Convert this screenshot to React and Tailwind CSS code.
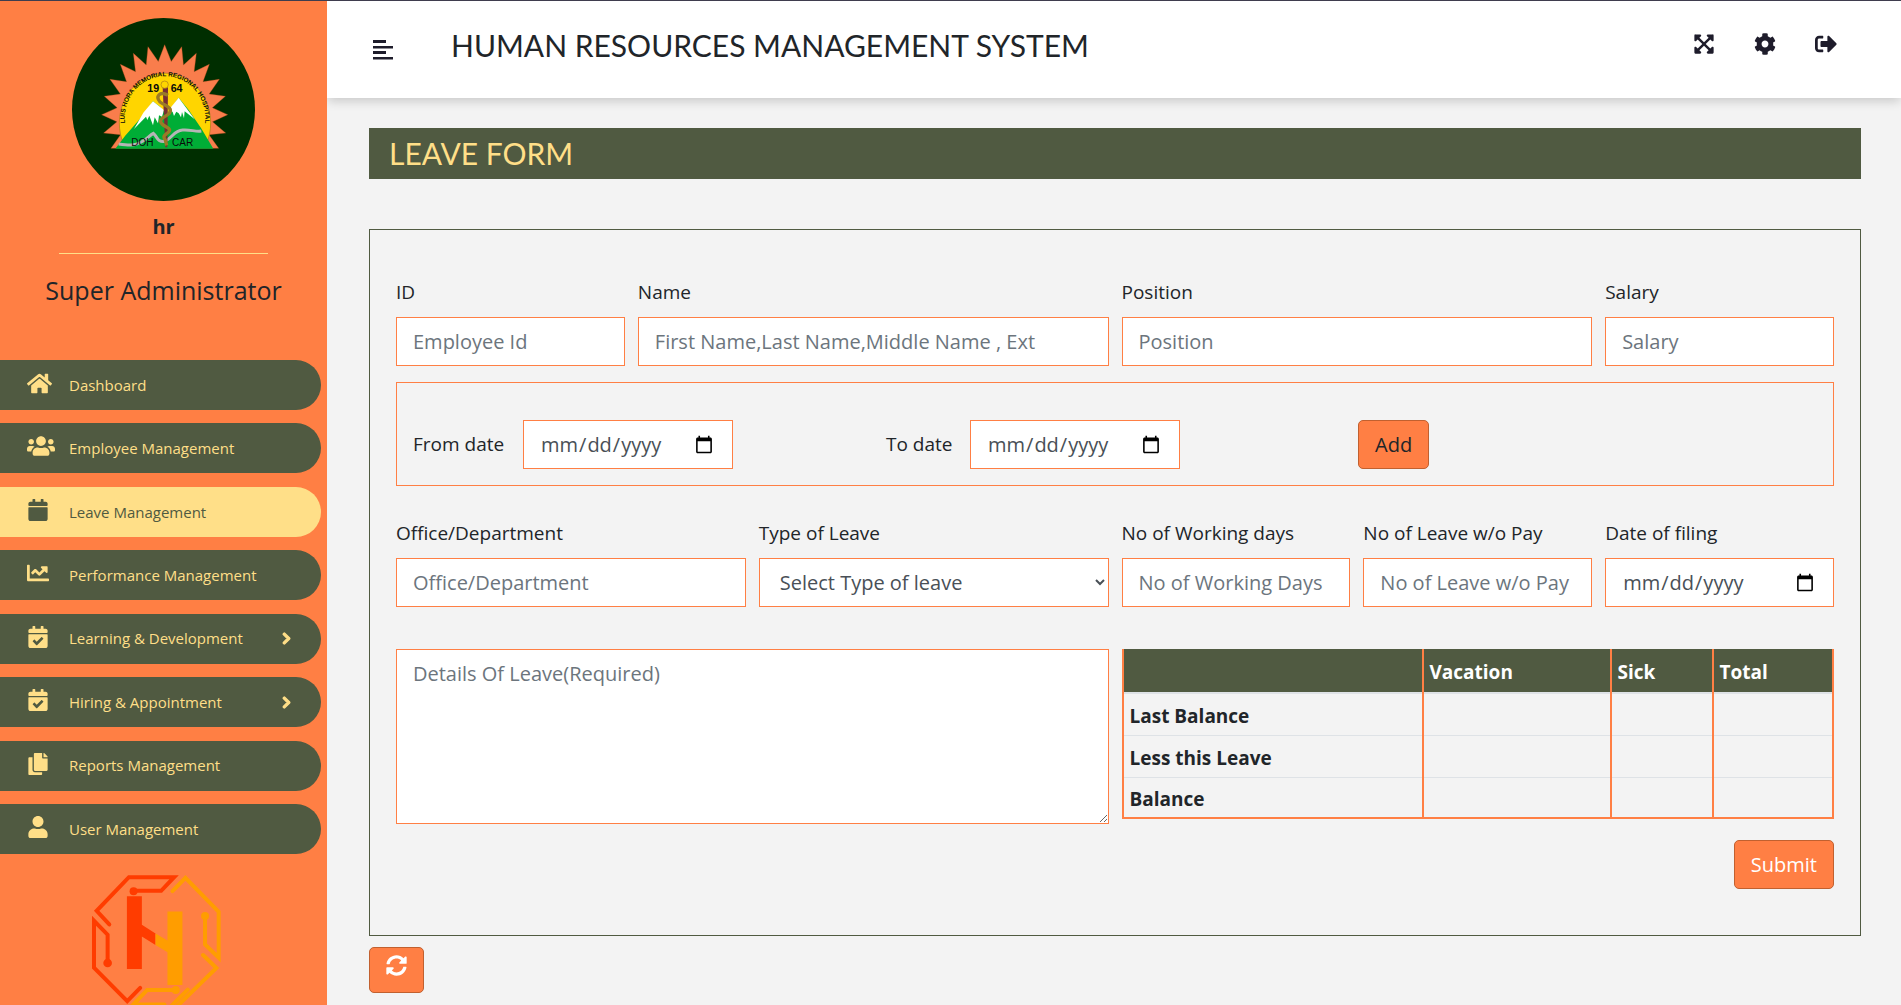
import React from "react";
import {
  FaHome,
  FaUsers,
  FaCalendar,
  FaChartLine,
  FaCalendarCheck,
  FaCopy,
  FaUser,
  FaChevronRight,
  FaExpandArrowsAlt,
  FaCog,
  FaSignOutAlt,
  FaSyncAlt,
} from "react-icons/fa";

const NAV = [
  { label: "Dashboard", Icon: FaHome, size: 25 },
  { label: "Employee Management", Icon: FaUsers, size: 28 },
  { label: "Leave Management", Icon: FaCalendar, size: 22, active: true },
  { label: "Performance Management", Icon: FaChartLine, size: 22 },
  { label: "Learning & Development", Icon: FaCalendarCheck, size: 22, more: true },
  { label: "Hiring & Appointment", Icon: FaCalendarCheck, size: 22, more: true },
  { label: "Reports Management", Icon: FaCopy, size: 22 },
  { label: "User Management", Icon: FaUser, size: 22 },
];

const RAY_TIPS = [
  [333, 445], [311, 399], [305, 344], [313, 289], [330, 238], [361, 193], [400, 160], [444, 140],
  [494, 134], [545, 140], [589, 160], [628, 193], [658, 238], [676, 289], [683, 344], [677, 399], [656, 445],
];

function sunPoints() {
  const out = [];
  RAY_TIPS.forEach((tip, i) => {
    out.push(tip.join(","));
    const next = RAY_TIPS[i + 1];
    if (next) {
      const mx = (tip[0] + next[0]) / 2 - 494.5;
      const my = (tip[1] + next[1]) / 2 - 345;
      out.push(`${494.5 + mx * 0.77},${345 + my * 0.77}`);
    }
  });
  return out.join(" ");
}

function HospitalSeal() {
  return (
    <svg viewBox="216 54 549 549" className="size-[183px] shrink-0" role="img" aria-label="Luis Hora Memorial Regional Hospital">
      <defs>
        <path id="seal-arc" d="M378 388 A121 127 0 1 1 612 388" />
      </defs>
      <circle cx="490.500" cy="328.500" r="274.500" fill="#002e00" />
      <polygon points={sunPoints()} fill="#f97d4c" stroke="#c9501f" strokeWidth="1" />
      <path d="M366 420 A137 150 0 1 1 624 420 Z" fill="#ffd500" stroke="#a8791c" strokeWidth="2" />
      <path d="M346 446 L375 408 L430 345 L459 304 L482 322 L500 345 L518 318 L536 293 L566 330 L603 384 L640 446 Z" fill="#00ad36" />
      <path
        d="M459 304 L430 338 L402 387 L438 350 L442 360 L448 347 L459 376 L464 352 L474 370 L477 346 L486 350 L492 330 Z"
        fill="#fff"
      />
      <path d="M536 293 L508 328 L518 336 L522 348 L529 335 L536 340 L543 352 L546 336 L552 355 L554 334 L584 358 Z" fill="#fff" />
      <path
        d="M356 432 C385 436 404 438 424 426 C444 416 448 406 460 400 C474 412 470 426 494 424 C520 412 520 392 548 390 C572 388 586 396 604 393"
        fill="none"
        stroke="#b5b5b5"
        strokeWidth="9"
      />
      <path d="M488 262 H504 L502 442 H496 Z" fill="#762f33" />
      <circle cx="494" cy="254" r="11" fill="#ffd500" stroke="#a8791c" strokeWidth="2" />
      <path
        d="M504 286 C478 272 466 290 480 306 C496 318 520 322 508 340 C496 352 472 356 486 372 C496 382 516 384 506 396 C496 404 486 408 496 420 L500 436"
        fill="none"
        stroke="#9a7a26"
        strokeWidth="10"
      />
      <g fontFamily="Liberation Sans, Arial, sans-serif" fill="#0a0a0a">
        <text x="442" y="275" fontSize="32" fontWeight="700">19</text>
        <text x="512" y="275" fontSize="32" fontWeight="700">64</text>
        <text x="394" y="437" fontSize="30">DOH</text>
        <text x="516" y="437" fontSize="30">CAR</text>
        <text fontSize="19" fontWeight="700">
          <textPath href="#seal-arc" startOffset="50%" textAnchor="middle">
            LUIS HORA MEMORIAL REGIONAL HOSPITAL
          </textPath>
        </text>
      </g>
    </svg>
  );
}

function CircuitLogo() {
  return (
    <svg viewBox="270 645 400 510" className="h-[170px] w-[133px]" fill="none" strokeWidth="12" strokeLinecap="round" aria-hidden="true">
      <g stroke="#ff3c00">
        <path d="M328 796 L290 755 L387 654 H523 L484 695 H401" />
        <path d="M323 911 V827 L282 785 V926 L382 1027 L421 987" />
        <circle cx="401" cy="696" r="12" fill="#ff3c00" stroke="none" />
        <circle cx="323" cy="912" r="13" fill="#ff3c00" stroke="none" />
      </g>
      <path d="M381 711 H426 V797 L467 823 V858 L426 832 V930 H381 Z" fill="#ff3c00" />
      <path d="M467 823 L503 844 V757 H548 V978 H503 V880 L467 858 Z" fill="#ff9d00" />
      <g stroke="#ff9d00">
        <path d="M518 696 L557 656 L657 758 V896 L616 856 V772" />
        <path d="M610 888 L650 927 L520 1054" />
        <path d="M528 993 H442 L400 1037 H494 M564 992 L510 1046" />
        <circle cx="616" cy="771" r="12" fill="#ff9d00" stroke="none" />
        <circle cx="528" cy="993" r="12" fill="#ff9d00" stroke="none" />
      </g>
    </svg>
  );
}

function Sidebar() {
  return (
    <aside className="relative z-10 flex w-[327px] shrink-0 flex-col items-center overflow-hidden bg-[#ff7f44] pt-[17px]">
      <HospitalSeal />
      <p className="mt-2.5 text-xl leading-8 font-bold">hr</p>
      <hr className="mt-2.5 w-[209px] border-[#ffdf88]" />
      <p className="mt-3.5 text-[25px] leading-[44px]">Super Administrator</p>
      <nav className="mt-12 grid h-[494px] w-full shrink-0 content-between pr-1.5">
        {NAV.map(({ label, Icon, size, active, more }) => (
          <a
            key={label}
            href="#"
            className={
              "flex h-[50px] items-center rounded-r-full pl-[27px] text-[15px] " +
              (active ? "bg-[#ffdf88] text-[#505a41]" : "bg-[#505a41] text-[#ffdf88]")
            }
          >
            <span className="w-[42px] pb-1">
              <Icon size={size} />
            </span>
            <span className="flex-1">{label}</span>
            {more && <FaChevronRight size={13} className="mr-7 stroke-current stroke-[50]" />}
          </a>
        ))}
      </nav>
      <div className="mt-5 mr-3.5 shrink-0">
        <CircuitLogo />
      </div>
    </aside>
  );
}

function TopBar() {
  return (
    <header className="relative flex h-[97px] shrink-0 items-start bg-white pt-5 pr-16 pl-[46px] shadow-[0_4px_10px_-1px_rgba(0,0,0,0.18)]">
      <button type="button" aria-label="Toggle menu" className="mt-[19px] text-[#1e1c2b]">
        <svg viewBox="0 0 20 20" className="size-5" fill="currentColor">
          <rect y="0" width="13" height="3" />
          <rect y="6" width="20" height="2.500" />
          <rect y="11" width="13" height="3" />
          <rect y="17" width="20" height="2.500" />
        </svg>
      </button>
      <h1 className="ml-[58px] flex-1 font-[Lato,sans-serif] text-3xl leading-[48px]">HUMAN RESOURCES MANAGEMENT SYSTEM</h1>
      <div className="mt-3 flex items-center gap-[39px] text-[#1e1c2b]">
        <button type="button" aria-label="Full screen"><FaExpandArrowsAlt size={22} /></button>
        <button type="button" aria-label="Settings"><FaCog size={22} /></button>
        <button type="button" aria-label="Sign out"><FaSignOutAlt size={22} /></button>
      </div>
    </header>
  );
}

const CONTROL =
  "h-[49px] w-full border border-[#ff7f44] bg-white px-4 text-xl text-[#495057] outline-none placeholder:text-[#6c757d]";
const BUTTON = "rounded-[5px] border border-[#c1602f] bg-[#ff7f44] px-4 text-xl";

function Field({ id, label, span, children, ...rest }) {
  return (
    <div className={span}>
      <label htmlFor={id} className="block pb-[11px] text-[19px] leading-7">{label}</label>
      {children || <input id={id} type="text" className={CONTROL} {...rest} />}
    </div>
  );
}

function BalanceTable() {
  const cell = "border-x-2 border-x-[#ff7f44] px-1.5 pt-1";
  return (
    <table className="w-full border-collapse border-b-2 border-b-[#ff7f44] text-left text-[19px]">
      <thead>
        <tr className="h-11 border-b-2 border-b-[#dee2e6] bg-[#505a41] text-white">
          <th scope="col" className={cell + " w-[300px]"}><span className="sr-only">Balance type</span></th>
          <th scope="col" className={cell + " w-[188px]"}>Vacation</th>
          <th scope="col" className={cell + " w-[102px]"}>Sick</th>
          <th scope="col" className={cell}>Total</th>
        </tr>
      </thead>
      <tbody>
        {["Last Balance", "Less this Leave", "Balance"].map((name) => (
          <tr key={name} className="h-[42px] border-t border-t-[#dee2e6] first:border-t-0 last:h-[41px]">
            <th scope="row" className={cell}>{name}</th>
            <td className={cell} />
            <td className={cell} />
            <td className={cell} />
          </tr>
        ))}
      </tbody>
    </table>
  );
}

function LeaveForm() {
  return (
    <form className="border border-[#505a41] px-[26px] pt-12 pb-[46px]" onSubmit={(e) => e.preventDefault()}>
      <div className="grid grid-cols-12 gap-x-[13px]">
        <Field id="emp-id" label="ID" span="col-span-2" placeholder="Employee Id" />
        <Field id="name" label="Name" span="col-span-4" placeholder="First Name,Last Name,Middle Name , Ext" />
        <Field id="position" label="Position" span="col-span-4" placeholder="Position" />
        <Field id="salary" label="Salary" span="col-span-2" placeholder="Salary" />
      </div>

      <div className="mt-4 flex items-center border border-[#ff7f44] px-4 pt-[37px] pb-4">
        <div className="flex w-[473px] items-center">
          <label htmlFor="from" className="w-[110px] text-[19px]">From date</label>
          <div className="w-[210px]"><input id="from" type="date" className={CONTROL} /></div>
        </div>
        <div className="flex w-[472px] items-center">
          <label htmlFor="to" className="w-[84px] text-[19px]">To date</label>
          <div className="w-[210px]"><input id="to" type="date" className={CONTROL} /></div>
        </div>
        <button type="button" className={BUTTON + " h-[49px] text-[#212529]"}>Add</button>
      </div>

      <div className="mt-[33px] grid grid-cols-12 gap-x-[13px]">
        <Field id="office" label="Office/Department" span="col-span-3" placeholder="Office/Department" />
        <Field id="type" label="Type of Leave" span="col-span-3">
          <select id="type" className={CONTROL}>
            <option>Select Type of leave</option>
          </select>
        </Field>
        <Field id="days" label="No of Working days" span="col-span-2" placeholder="No of Working Days" />
        <Field id="nopay" label="No of Leave w/o Pay" span="col-span-2" placeholder="No of Leave w/o Pay" />
        <Field id="filing" label="Date of filing" span="col-span-2">
          <input id="filing" type="date" className={CONTROL} />
        </Field>
      </div>

      <div className="mt-[42px] grid grid-cols-2 gap-x-[13px]">
        <div>
          <textarea
            aria-label="Details of leave"
            placeholder="Details Of Leave(Required)"
            className="block h-[175px] w-full border border-[#ff7f44] bg-white px-4 py-2.5 text-xl text-[#495057] outline-none placeholder:text-[#6c757d]"
          />
        </div>
        <div>
          <BalanceTable />
          <div className="mt-[21px] flex justify-end">
            <button type="submit" className={BUTTON + " h-[49px] text-white"}>Submit</button>
          </div>
        </div>
      </div>
    </form>
  );
}

export default function App() {
  return (
    <div className="flex h-screen overflow-hidden border-t border-[#3f3d4e] bg-[#f3f3f3] font-['Open_Sans','Noto_Sans',sans-serif] text-[#212529]">
      <Sidebar />
      <div className="flex min-w-0 flex-1 flex-col">
        <TopBar />
        <main className="pt-[30px] pr-10 pl-[42px]">
          <h2 className="bg-[#505a41] px-5 font-[Lato,sans-serif] text-3xl leading-[51px] text-[#ffdf88]">LEAVE FORM</h2>
          <div className="mt-[50px]"><LeaveForm /></div>
          <button type="button" aria-label="Reload" className={BUTTON + " mt-[11px] h-[46px] pb-2.5 text-white"}>
            <FaSyncAlt size={21} />
          </button>
        </main>
      </div>
    </div>
  );
}
